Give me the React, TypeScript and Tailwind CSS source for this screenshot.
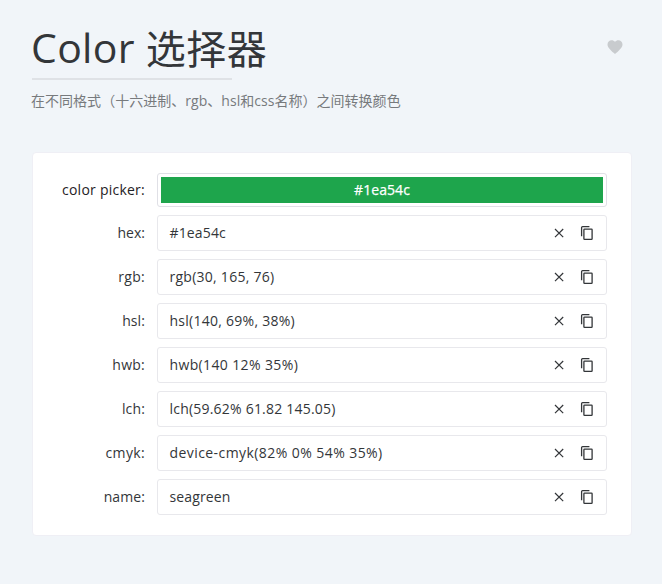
import React from "react";

const rows = [
  { label: "hex", value: "#1ea54c", tracking: "tracking-[0.14px]", labelTracking: "" },
  { label: "rgb", value: "rgb(30, 165, 76)", tracking: "tracking-[0.26px]", labelTracking: "tracking-[0.3px]" },
  { label: "hsl", value: "hsl(140, 69%, 38%)", tracking: "tracking-[0.26px]", labelTracking: "tracking-[0.1px]" },
  { label: "hwb", value: "hwb(140 12% 35%)", tracking: "tracking-[0.37px]", labelTracking: "tracking-[0.25px]" },
  { label: "lch", value: "lch(59.62% 61.82 145.05)", tracking: "tracking-[0.21px]", labelTracking: "tracking-[0.15px]" },
  { label: "cmyk", value: "device-cmyk(82% 0% 54% 35%)", tracking: "tracking-[0.43px]", labelTracking: "tracking-[0.35px]" },
  { label: "name", value: "seagreen", tracking: "tracking-[0.14px]", labelTracking: "tracking-[0.1px]" },
];

function CloseIcon() {
  return (
    <svg width="16" height="16" viewBox="0 0 16 16" fill="none" stroke="currentColor" strokeWidth="1.2">
      <path d="M4 4L12.2 12.2M12.2 4L4 12.2" />
    </svg>
  );
}

function CopyIcon() {
  return (
    <svg width="16" height="16" viewBox="0 0 16 16" fill="none" stroke="currentColor" strokeWidth="1.3">
      <path d="M2.6 11.2V2.6c0-.6.4-1 1-1H10.4" />
      <rect x="4.9" y="4.1" width="8.2" height="10.2" rx="0.6" />
    </svg>
  );
}

export default function App() {
  return (
    <main className="h-[584px] w-[662px] overflow-hidden bg-[#f1f5f9] pt-6 pr-[31px] pl-8 font-['Open_Sans','Noto_Sans_CJK_SC',sans-serif] text-sm text-[#333639]">
      <header className="flex h-32 items-start justify-between">
        <div>
          <h1 className="-ml-px flex h-[54px] items-start whitespace-pre text-[40px] leading-[48px]">
            <span className="-mt-px text-[41px] tracking-[0.3px]">Color </span>
            <span className="pt-px tracking-[0.5px]">选择器</span>
          </h1>
          <div className="h-0.5 w-[200px] bg-[#dfe2e6]" />
          <p className="mt-[11px] -ml-px leading-5 tracking-[0.03px] text-[#777a7d]">在不同格式（十六进制、rgb、hsl和css名称）之间转换颜色</p>
        </div>
        <svg className="mt-3.5 mr-[7.5px]" width="18" height="18" viewBox="0 0 24 24" fill="#c8cbce">
          <path d="M12 21.35l-1.45-1.32C5.4 15.36 2 12.28 2 8.5 2 5.42 4.42 3 7.5 3c1.74 0 3.41.81 4.5 2.09C13.09 3.81 14.76 3 16.5 3 19.58 3 22 5.42 22 8.5c0 3.78-3.4 6.86-8.55 11.54L12 21.35z" />
        </svg>
      </header>
      <section className="flex h-96 w-[600px] flex-col gap-2 rounded border border-[#efeff5] bg-white pt-5 pl-6">
        <div className="flex h-[34px] items-center gap-3">
          <div className="flex w-[88px] justify-end whitespace-nowrap tracking-[0.24px] text-[#1f2225]">color picker:</div>
          <div className="h-[34px] w-[450px] rounded-[3px] border border-[#e0e0e6] p-[3px]">
            <div className="flex h-full items-center justify-center bg-[#1ea54c] tracking-[0.07px] text-white [-webkit-text-stroke:0.25px_white]">#1ea54c</div>
          </div>
        </div>
        {rows.map((r) => (
          <div key={r.label} className="flex h-9 items-center gap-3">
            <div className={`w-[88px] text-right ${r.labelTracking}`}>{r.label}:</div>
            <div className="flex h-9 w-[450px] items-center gap-3 rounded-[3px] border border-[#e8e8ec] pr-[11px] pl-[11.5px]">
              <span className={`flex-1 ${r.tracking}`}>{r.value}</span>
              <CloseIcon />
              <CopyIcon />
            </div>
          </div>
        ))}
      </section>
    </main>
  );
}
